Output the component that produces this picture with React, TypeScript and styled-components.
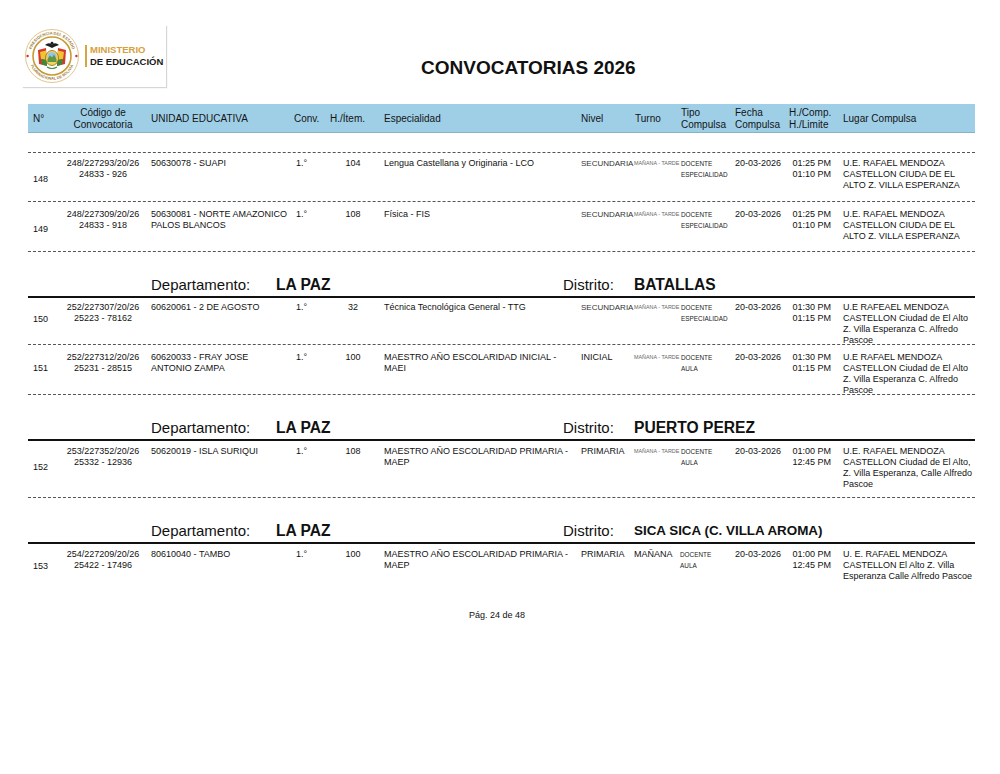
import React from 'react';
import styled, { createGlobalStyle } from 'styled-components';

const GlobalStyle = createGlobalStyle`
  html, body {
    margin: 0;
    padding: 0;
    background: #ffffff;
  }
  body {
    font-family: 'Liberation Sans', Arial, sans-serif;
    color: #111;
  }
`;

const cols = '32px 86px 144px 36px 54px 197px 54px 46px 54px 54px 54px 136px';

const Page = styled.div`
  width: 1000px;
  height: 774px;
  overflow: hidden;
`;

const TopBar = styled.div`
  display: flex;
  align-items: flex-start;
  padding: 25px 0 0 22px;
`;

const LogoBox = styled.div`
  width: 144px;
  height: 62px;
  flex-shrink: 0;
  box-sizing: border-box;
  display: flex;
  align-items: center;
  padding-left: 2px;
  box-shadow: 1px 1px 1px #d6d6d6;
  svg {
    flex-shrink: 0;
  }
`;

const GoldBar = styled.div`
  width: 2px;
  height: 22px;
  flex-shrink: 0;
  background: #d4a545;
  margin: 0 3px 0 5px;
`;

const LogoText = styled.div`
  display: flex;
  flex-direction: column;
  flex-shrink: 0;
  white-space: nowrap;
  font-weight: 700;
  font-size: 9.5px;
  line-height: 12px;
`;

const LogoLine = styled.span<{ $gold?: boolean }>`
  color: ${(p) => (p.$gold ? '#d5a13c' : '#1a1a1a')};
`;

const Title = styled.h1`
  margin: 32px 0 0 255px;
  font-size: 19px;
  line-height: 22px;
  font-weight: 700;
  color: #111;
  white-space: nowrap;
`;

const Table = styled.div`
  width: 947px;
  margin: 17px 0 0 28px;
`;

const HeadRow = styled.div`
  display: grid;
  grid-template-columns: ${cols};
  height: 29px;
  box-sizing: border-box;
  background: #9fcfe7;
  border-bottom: 1px solid #86b3c8;
  align-items: center;
  font-size: 10px;
  line-height: 11.5px;
  color: #141414;
`;

const HeadCell = styled.div<{ $center?: boolean; $pl?: number }>`
  padding: 1px 4px 0 ${(p) => p.$pl ?? 4}px;
  text-align: ${(p) => (p.$center ? 'center' : 'left')};
  white-space: nowrap;
`;

const Divider = styled.div`
  margin-top: 19px;
  border-top: 1px dashed #555;
`;

const Row = styled.div<{ $h: number; $pad: number; $last?: boolean }>`
  display: grid;
  grid-template-columns: ${cols};
  height: ${(p) => p.$h}px;
  box-sizing: border-box;
  padding-top: ${(p) => p.$pad}px;
  border-bottom: ${(p) => (p.$last ? 'none' : '1px dashed #555')};
  align-items: start;
  font-size: 9px;
  line-height: 11px;
  color: #111;
`;

const Cell = styled.div<{ $align?: 'left' | 'center' | 'right'; $pl?: number }>`
  padding: 0 ${(p) => (p.$align === 'right' ? 8 : 4)}px 0 ${(p) => p.$pl ?? 4}px;
  text-align: ${(p) => p.$align ?? 'left'};
  white-space: nowrap;
  min-width: 0;
`;

const NumCell = styled.div<{ $off: number }>`
  padding: ${(p) => p.$off}px 0 0 5px;
`;

const Line = styled.div``;

const Nivel = styled.div<{ $small?: boolean }>`
  font-size: ${(p) => (p.$small ? '8px' : '9px')};
  color: ${(p) => (p.$small ? '#333' : '#111')};
`;

const Tiny = styled.div`
  font-size: 5.4px;
  color: #666;
`;

const TipoText = styled.div`
  font-size: 6.4px;
  color: #222;
`;

const DeptRow = styled.div`
  display: flex;
  align-items: flex-start;
  height: 46px;
  box-sizing: border-box;
  padding: 24px 0 0 123px;
  border-bottom: 2px solid #111;
  font-size: 15px;
  line-height: 18px;
  white-space: nowrap;
`;

const DeptLabel = styled.span<{ $w: number }>`
  width: ${(p) => p.$w}px;
  flex-shrink: 0;
  color: #111;
`;

const DeptValue = styled.span<{ $w?: number; $size?: number }>`
  width: ${(p) => (p.$w ? `${p.$w}px` : 'auto')};
  flex-shrink: 0;
  font-size: ${(p) => p.$size ?? 15.6}px;
  font-weight: 700;
  color: #111;
`;

const Footer = styled.div`
  margin-top: 20px;
  width: 947px;
  margin-left: 28px;
  padding-right: 9px;
  box-sizing: border-box;
  text-align: center;
  font-size: 9px;
  line-height: 11px;
  color: #111;
`;

const Seal: React.FC = () => (
  <svg width="56" height="56" viewBox="0 0 56 56">
    <defs>
      <path id="sealTop" d="M 6.5 28 A 21.5 21.5 0 0 1 49.5 28" />
      <path id="sealBot" d="M 5.2 29 A 22.8 22.8 0 0 0 50.8 29" />
    </defs>
    <circle cx="28" cy="28" r="26.5" fill="#fff" stroke="#e2c68c" strokeWidth="1" />
    <circle cx="28" cy="28" r="19" fill="#fff" stroke="#c99a33" strokeWidth="1.6" />
    <text fontSize="4" fill="#9a7a3a" fontFamily="Liberation Sans, sans-serif" fontWeight="700">
      <textPath href="#sealTop" startOffset="50%" textAnchor="middle">
        PRESIDENCIA DEL ESTADO
      </textPath>
    </text>
    <text fontSize="3.8" fill="#9a7a3a" fontFamily="Liberation Sans, sans-serif" fontWeight="700">
      <textPath href="#sealBot" startOffset="50%" textAnchor="middle">
        PLURINACIONAL DE BOLIVIA
      </textPath>
    </text>
    <circle cx="3.6" cy="28" r="1.2" fill="#c8352b" />
    <circle cx="52.4" cy="28" r="1.2" fill="#c8352b" />
    {/* flags left */}
    <path d="M14 22 L22 20 L23 38 L15 36 Z" fill="#d33a2c" />
    <path d="M16 24 L22 22.5 L22.6 32 L17 31 Z" fill="#f2c230" />
    <path d="M17 31 L22.6 32 L23 38 L18 36.5 Z" fill="#3d8b3a" />
    {/* flags right */}
    <path d="M42 22 L34 20 L33 38 L41 36 Z" fill="#d33a2c" />
    <path d="M40 24 L34 22.5 L33.4 32 L39 31 Z" fill="#f2c230" />
    <path d="M39 31 L33.4 32 L33 38 L38 36.5 Z" fill="#3d8b3a" />
    {/* shield */}
    <ellipse cx="28" cy="30" rx="6.5" ry="7.5" fill="#f4d35e" stroke="#8a6d1c" strokeWidth="0.8" />
    <ellipse cx="28" cy="29" rx="4.5" ry="4.8" fill="#8fc6e8" />
    <path d="M23.6 31 L26 27.5 L28 29.5 L30 26.5 L32.4 31 Z" fill="#6b8f3a" />
    <rect x="23.5" y="31" width="9" height="3" fill="#5a9a48" />
    {/* condor */}
    <path d="M21 17 Q24.5 14 28 16.5 Q31.5 14 35 17 L31 18.5 L28 20 L25 18.5 Z" fill="#1e1e1e" />
    <circle cx="28" cy="15.2" r="1.4" fill="#1e1e1e" />
    <path d="M23 39 Q28 42 33 39" stroke="#3d8b3a" strokeWidth="1.2" fill="none" />
  </svg>
);

type Data = {
  n: string;
  code: [string, string];
  ue: string[];
  conv: string;
  item: string;
  esp: string[];
  nivel: string;
  nivelSmall?: boolean;
  turno: string;
  turnoSmall?: boolean;
  tipo: [string, string];
  fecha: string;
  times: [string, string];
  lugar: string[];
  h: number;
  pad: number;
  off: number;
  last?: boolean;
};

const lugar1 = ['U.E. RAFAEL MENDOZA', 'CASTELLON CIUDA DE EL', 'ALTO Z. VILLA ESPERANZA'];

const group0: Data[] = [
  {
    n: '148', code: ['248/227293/20/26', '24833 - 926'], ue: ['50630078 - SUAPI'], conv: '1.°', item: '104',
    esp: ['Lengua Castellana y Originaria - LCO'], nivel: 'SECUNDARIA', nivelSmall: true,
    turno: 'MAÑANA - TARDE', turnoSmall: true, tipo: ['DOCENTE', 'ESPECIALIDAD'], fecha: '20-03-2026',
    times: ['01:25 PM', '01:10 PM'], lugar: lugar1, h: 49, pad: 5, off: 16,
  },
  {
    n: '149', code: ['248/227309/20/26', '24833 - 918'], ue: ['50630081 - NORTE AMAZONICO', 'PALOS BLANCOS'],
    conv: '1.°', item: '108', esp: ['Física - FIS'], nivel: 'SECUNDARIA', nivelSmall: true,
    turno: 'MAÑANA - TARDE', turnoSmall: true, tipo: ['DOCENTE', 'ESPECIALIDAD'], fecha: '20-03-2026',
    times: ['01:25 PM', '01:10 PM'], lugar: lugar1, h: 50, pad: 7, off: 15,
  },
];

const groups: { dept: string; dist: string; distSize?: number; rows: Data[] }[] = [
  {
    dept: 'LA PAZ',
    dist: 'BATALLAS',
    rows: [
      {
        n: '150', code: ['252/227307/20/26', '25223 - 78162'], ue: ['60620061 - 2 DE AGOSTO'], conv: '1.°', item: '32',
        esp: ['Técnica Tecnológica General - TTG'], nivel: 'SECUNDARIA', nivelSmall: true,
        turno: 'MAÑANA - TARDE', turnoSmall: true, tipo: ['DOCENTE', 'ESPECIALIDAD'], fecha: '20-03-2026',
        times: ['01:30 PM', '01:15 PM'],
        lugar: ['U.E RAFEAEL MENDOZA', 'CASTELLON Ciudad de El Alto', 'Z. Villa Esperanza C. Alfredo', 'Pascoe'],
        h: 47, pad: 4, off: 12,
      },
      {
        n: '151', code: ['252/227312/20/26', '25231 - 28515'], ue: ['60620033 - FRAY JOSE', 'ANTONIO ZAMPA'],
        conv: '1.°', item: '100', esp: ['MAESTRO AÑO ESCOLARIDAD INICIAL -', 'MAEI'], nivel: 'INICIAL',
        turno: 'MAÑANA - TARDE', turnoSmall: true, tipo: ['DOCENTE', 'AULA'], fecha: '20-03-2026',
        times: ['01:30 PM', '01:15 PM'],
        lugar: ['U.E RAFAEL  MENDOZA', 'CASTELLON Ciudad de El Alto', 'Z. Villa Esperanza C. Alfredo', 'Pascoe'],
        h: 50, pad: 7, off: 11,
      },
    ],
  },
  {
    dept: 'LA PAZ',
    dist: 'PUERTO PEREZ',
    rows: [
      {
        n: '152', code: ['253/227352/20/26', '25332 - 12936'], ue: ['50620019 - ISLA SURIQUI'], conv: '1.°',
        item: '108', esp: ['MAESTRO AÑO ESCOLARIDAD PRIMARIA -', 'MAEP'], nivel: 'PRIMARIA',
        turno: 'MAÑANA - TARDE', turnoSmall: true, tipo: ['DOCENTE', 'AULA'], fecha: '20-03-2026',
        times: ['01:00 PM', '12:45 PM'],
        lugar: ['U.E. RAFAEL MENDOZA', 'CASTELLON Ciudad de El Alto,', 'Z. Villa Esperanza, Calle Alfredo', 'Pascoe'],
        h: 57, pad: 5, off: 16,
      },
    ],
  },
  {
    dept: 'LA PAZ',
    dist: 'SICA SICA (C. VILLA AROMA)',
    distSize: 13.4,
    rows: [
      {
        n: '153', code: ['254/227209/20/26', '25422 - 17496'], ue: ['80610040 - TAMBO'], conv: '1.°', item: '100',
        esp: ['MAESTRO AÑO ESCOLARIDAD PRIMARIA -', 'MAEP'], nivel: 'PRIMARIA', turno: 'MAÑANA',
        tipo: ['DOCENTE', 'AULA'], fecha: '20-03-2026', times: ['01:00 PM', '12:45 PM'],
        lugar: ['U. E. RAFAEL MENDOZA', 'CASTELLON El Alto Z. Villa', 'Esperanza Calle Alfredo Pascoe'],
        h: 46, pad: 5, off: 12, last: true,
      },
    ],
  },
];

const Lines: React.FC<{ items: string[] }> = ({ items }) => (
  <>
    {items.map((t, i) => (
      <Line key={i}>{t}</Line>
    ))}
  </>
);

const DataRow: React.FC<{ d: Data }> = ({ d }) => (
  <Row $h={d.h} $pad={d.pad} $last={d.last}>
    <NumCell $off={d.off}>{d.n}</NumCell>
    <Cell $align="center">
      <Lines items={d.code} />
    </Cell>
    <Cell $pl={5}>
      <Lines items={d.ue} />
    </Cell>
    <Cell $pl={6}>{d.conv}</Cell>
    <Cell $align="center">{d.item}</Cell>
    <Cell>
      <Lines items={d.esp} />
    </Cell>
    <Cell>
      <Nivel $small={d.nivelSmall}>{d.nivel}</Nivel>
    </Cell>
    <Cell $pl={3}>{d.turnoSmall ? <Tiny>{d.turno}</Tiny> : d.turno}</Cell>
    <Cell $pl={d.turnoSmall ? 4 : 3}>
      <TipoText>{d.tipo[0]}</TipoText>
      <TipoText>{d.tipo[1]}</TipoText>
    </Cell>
    <Cell>{d.fecha}</Cell>
    <Cell $align="right">
      <Lines items={d.times} />
    </Cell>
    <Cell>
      <Lines items={d.lugar} />
    </Cell>
  </Row>
);

const DeptHeader: React.FC<{ dept: string; dist: string; distSize?: number }> = ({ dept, dist, distSize }) => (
  <DeptRow>
    <DeptLabel $w={125}>Departamento:</DeptLabel>
    <DeptValue $w={287}>{dept}</DeptValue>
    <DeptLabel $w={71}>Distrito:</DeptLabel>
    <DeptValue $size={distSize}>{dist}</DeptValue>
  </DeptRow>
);

export default function App() {
  return (
    <Page>
      <GlobalStyle />
      <TopBar>
        <LogoBox>
          <Seal />
          <GoldBar />
          <LogoText>
            <LogoLine $gold>MINISTERIO</LogoLine>
            <LogoLine>DE EDUCACIÓN</LogoLine>
          </LogoText>
        </LogoBox>
        <Title>CONVOCATORIAS 2026</Title>
      </TopBar>
      <Table>
        <HeadRow>
          <HeadCell $pl={5}>N°</HeadCell>
          <HeadCell $center>
            Código de
            <br />
            Convocatoria
          </HeadCell>
          <HeadCell $pl={5}>UNIDAD EDUCATIVA</HeadCell>
          <HeadCell>Conv.</HeadCell>
          <HeadCell>H./Ítem.</HeadCell>
          <HeadCell>Especialidad</HeadCell>
          <HeadCell>Nivel</HeadCell>
          <HeadCell>Turno</HeadCell>
          <HeadCell>
            Tipo
            <br />
            Compulsa
          </HeadCell>
          <HeadCell>
            Fecha
            <br />
            Compulsa
          </HeadCell>
          <HeadCell>
            H./Comp.
            <br />
            H./Limite
          </HeadCell>
          <HeadCell>Lugar Compulsa</HeadCell>
        </HeadRow>
        <Divider />
        {group0.map((d) => (
          <DataRow key={d.n} d={d} />
        ))}
        {groups.map((g) => (
          <React.Fragment key={g.dist}>
            <DeptHeader dept={g.dept} dist={g.dist} distSize={g.distSize} />
            {g.rows.map((d) => (
              <DataRow key={d.n} d={d} />
            ))}
          </React.Fragment>
        ))}
      </Table>
      <Footer>Pág. 24 de 48</Footer>
    </Page>
  );
}
